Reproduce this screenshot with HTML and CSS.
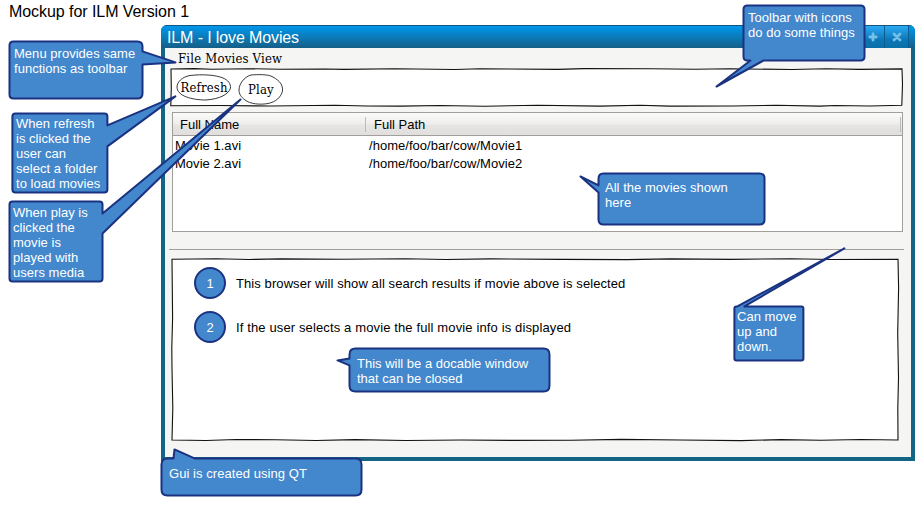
FILE: index.html
```html
<!DOCTYPE html>
<html lang="en">
<head>
<meta charset="utf-8">
<title>Mockup for ILM Version 1</title>
<link rel="stylesheet" href="styles.css">
</head>
<body>
<main class="canvas">
  <h1 class="heading">Mockup for ILM Version 1</h1>

  <section class="window">
    <header class="titlebar">
      <span class="title">ILM - I love Movies</span>
      <div class="controls">
        <span class="control"></span>
        <span class="control"><svg width="10" height="10" viewBox="0 0 10 10"><path d="M5 1.8v6.4M1.8 5h6.4"/></svg></span>
        <span class="control"><svg width="10" height="10" viewBox="0 0 10 10"><path d="M2 2l6 6M8 2L2 8"/></svg></span>
      </div>
    </header>
    <div class="body">
      <nav class="menu">File Movies View</nav>
      <div class="toolbar">
        <svg class="sketch" width="733" height="39" viewBox="0 0 733 39"><path d="M1 1L24 .6 42 1.2 78 .7 110 1.3 154 1 174 1.4 225 .7 285 1.5 310 .8 388 1.4 414 .6 480 .7 525 1.3 560 .8 622 1.5 656 .8 690 1.4 732 .9 732.5 16 731.8 37.3 700 38 665 37.5 650 38.1 606 37.3 562 38 500 38.1 470 37.3 430 38.1 368 37.3 315 38.2 270 37.5 230 38.1 197 38 165 37.2 100 38 50 37.5 .8 37.7 1.3 20Z"/></svg>
        <span class="tool refresh"><svg class="sketch" width="56" height="27" viewBox="0 0 56 27"><path d="M1 13C1 8 6 3 14 1.5 27 0 40 1 47 4 52 6 55 10 54.5 14 53 20 44 25 30 26 16 26 1 22 1 13Z"/></svg>Refresh</span>
        <span class="tool play"><svg class="sketch" width="46" height="31" viewBox="0 0 46 31"><path d="M1 16C1 10 6 3 13 1 20 .5 30 0 35 3 42 7 45 11 44.5 17 43 23 38 28 30 29.5 22 31 12 30 7 26 3 23 1 20 1 16Z"/></svg>Play</span>
      </div>
      <div class="table">
        <div class="thead"><span class="col-name">Full Name</span><span class="col-path">Full Path</span></div>
        <div class="row"><span>Movie 1.avi</span><span>/home/foo/bar/cow/Movie1</span></div>
        <div class="row"><span>Movie 2.avi</span><span>/home/foo/bar/cow/Movie2</span></div>
      </div>
      <div class="splitter"></div>
      <div class="details">
        <svg class="sketch" width="729" height="184" viewBox="0 0 729 184"><path d="M1 1.2L45 .7 78 1.5 110 .9 170 1.3 234 .7 275 1.5 320 .9 390 1.4 456 1.6 500 .9 560 1.4 620 .7 660 1.5 727 1.2 727.6 30 726.7 75 727.5 120 726.8 150 727 182 690 181.5 650 182.3 610 181.6 570 182.6 510 182 450 181.4 400 182.2 340 182.4 290 182 235 182.5 184 181.6 145 182.5 105 181.7 65 181.5 35 182.5 1 182 1.8 150 1 110 .8 90 1.6 60Z"/></svg>
        <div class="note"><span class="num">1</span><span class="text first-text">This browser will show all search results if movie above is selected</span></div>
        <div class="note"><span class="num">2</span><span class="text second-text">If the user selects a movie the full movie info is displayed</span></div>
      </div>
    </div>
  </section>

  <aside class="callout c-menu">
    <svg><path d="M5 1H129Q134 1 134 6V11L167 22 134 24V53Q134 58 129 58H5Q1 58 1 54V5Q1 1 5 1Z"/></svg>
    <p>Menu provides same<br>functions as toolbar</p>
  </aside>
  <aside class="callout c-refresh">
    <svg><path d="M4 1H93Q96 1 96 4V13L164-16 96 34V77Q96 80 93 80H4Q1 80 1 77V4Q1 1 4 1Z"/></svg>
    <p>When refresh<br>is clicked the<br>user can<br>select a folder<br>to load movies</p>
  </aside>
  <aside class="callout c-play">
    <svg><path d="M4 1H91Q94 1 94 4V13L232-101 94 33V78Q94 81 91 81H4Q1 81 1 78V4Q1 1 4 1Z"/></svg>
    <p>When play is<br>clicked the<br>movie is<br>played with<br>users media</p>
  </aside>
  <aside class="callout c-toolbar">
    <svg><path d="M5 1H118Q122 1 122 5V52Q122 56 118 56H21L-26 82 8 56H5Q1 56 1 52V5Q1 1 5 1Z"/></svg>
    <p>Toolbar with icons<br>do do some things</p>
  </aside>
  <aside class="callout c-movies">
    <svg><path d="M6 1H162Q167 1 167 6V47Q167 52 162 52H6Q1 52 1 47V20L-17 4 1 13V6Q1 1 6 1Z"/></svg>
    <p>All the movies shown<br>here</p>
  </aside>
  <aside class="callout c-splitter">
    <svg><path d="M3 1H4L111-57 11 1H68Q70 1 70 3V53Q70 55 68 55H3Q1 55 1 53V3Q1 1 3 1Z"/></svg>
    <p>Can move<br>up and<br>down.</p>
  </aside>
  <aside class="callout c-dock">
    <svg><path d="M7 1H195Q201 1 201 7V38Q201 44 195 44H7Q1 44 1 38V18L-11 13 1 11V7Q1 1 7 1Z"/></svg>
    <p>This will be a docable window<br>that can be closed</p>
  </aside>
  <aside class="callout c-gui">
    <svg><path d="M7 1H13L14-8 34 1H195Q201 1 201 7V32Q201 38 195 38H7Q1 38 1 32V7Q1 1 7 1Z"/></svg>
    <p>Gui is created using QT</p>
  </aside>
</main>
</body>
</html>
```
FILE: styles.css
```css
* { box-sizing: border-box; }
body {
  margin: 0;
  background: #fff;
  color: #000;
  font: 13px/18px "Liberation Sans", sans-serif;
}
.canvas { position: relative; width: 921px; height: 524px; overflow: hidden; white-space: nowrap; }
.heading { margin: 0; padding: 2px 0 0 9px; height: 25px; font-size: 16px; line-height: 19px; font-weight: 400; letter-spacing: -.06px; }

.window {
  width: 754px;
  height: 436px;
  margin-left: 161px;
  background: #146488;
  border-radius: 6px 6px 0 0;
  overflow: hidden;
}
.titlebar {
  display: flex;
  justify-content: space-between;
  height: 23px;
  padding-left: 6px;
  border-top: 1px solid #15567a;
  background: linear-gradient(#0097ec, #155f87);
}
.title { color: #fff; font-size: 16px; line-height: 23px; letter-spacing: -.12px; }
.controls { display: flex; margin-right: 6px; }
.control {
  display: flex;
  align-items: center;
  justify-content: center;
  width: 24px;
  border-right: 1px solid #0a5d8e;
  background: linear-gradient(#2aa9f5, #0b75b4 65%, #0b70a8);
}
.control path { fill: none; stroke: #76bfe8; stroke-width: 2.8; stroke-linecap: round; }

.body { height: 409px; margin: 0 4px; background: #f5f5f4; }
.menu { height: 20px; padding: 1px 0 0 13px; font: 13px/19px "DejaVu Serif Condensed", "DejaVu Serif", serif; letter-spacing: .2px; }
.sketch { position: absolute; left: 0; top: 0; overflow: visible; }
.sketch path { fill: #fff; stroke: #111; stroke-width: 1.1; }

.toolbar { position: relative; display: flex; width: 733px; height: 39px; margin-left: 5px; padding: 6px 0 0 6px; gap: 6px; }
.tool { position: relative; z-index: 0; text-align: center; font: 13px/27px "DejaVu Serif Condensed", "DejaVu Serif", serif; letter-spacing: .15px; }
.tool .sketch { z-index: -1; }
.tool .sketch path { stroke-width: .9; stroke: #222; }
.refresh { width: 56px; height: 27px; }
.play { width: 46px; height: 31px; line-height: 31px; }

.table { width: 731px; height: 120px; margin: 5px 0 0 7px; border: 1px solid #a09f9c; background: #fff; }
.thead {
  display: grid;
  grid-template-columns: 193px 1fr;
  align-items: center;
  height: 23px;
  margin-bottom: 1px;
  padding-right: 1px;
  border-bottom: 1px solid #a09f9c;
  background: linear-gradient(#fbfbfa, #eeedec 50%, #e6e5e4 55%, #e0dfde);
}
.thead span { height: 15px; line-height: 16px; padding-left: 7px; border-right: 1px solid #bbb; }
.thead .col-path { padding-left: 8px; }
.row { display: grid; grid-template-columns: 194px 1fr; height: 18px; padding-left: 2px; letter-spacing: .03px; }

.splitter { width: 735px; height: 1px; margin: 17px 0 0 4px; background: #a09f99; }

.details { position: relative; z-index: 0; width: 729px; height: 184px; margin: 8px 0 0 6px; padding: 9px 0 0 23px; }
.details > .sketch { z-index: -1; }
.note { display: flex; align-items: center; gap: 10px; height: 32px; margin-bottom: 12px; }
.text { padding-top: 2px; }
.first-text { letter-spacing: .085px; }
.second-text { letter-spacing: .13px; }
.num {
  width: 32px;
  height: 32px;
  border: 2px solid #1b3281;
  border-radius: 50%;
  background: #4387cd;
  color: #fff;
  line-height: 29px;
  text-align: center;
}

.callout { position: absolute; color: #fff; line-height: 15px; letter-spacing: .03px; }
.callout p { position: relative; margin: 0; }
.callout svg { position: absolute; left: 0; top: 0; width: 100%; height: 100%; overflow: visible; transform: translate(-.5px, .4px); }
.callout path { fill: #4387cd; stroke: #1b3281; stroke-width: 2; stroke-linejoin: round; }
.c-play svg, .c-toolbar svg { transform: translate(-.5px, -.5px); }
.c-refresh svg, .c-splitter svg { transform: translate(.4px, .4px); }
.c-menu { left: 9px; top: 40px; width: 135px; height: 60px; padding: 6px 5px; }
.c-refresh { left: 11px; top: 112px; width: 97px; height: 81px; padding: 4px 5px; }
.c-play { left: 9px; top: 201px; width: 95px; height: 82px; padding: 4px; }
.c-toolbar { left: 743px; top: 5px; width: 123px; height: 57px; padding: 5px; }
.c-movies { left: 598px; top: 172px; width: 168px; height: 53px; padding: 8px 7px; }
.c-splitter { left: 733px; top: 305px; width: 71px; height: 56px; padding: 4px; }
.c-dock { left: 349px; top: 347px; width: 202px; height: 45px; padding: 9px 8px; letter-spacing: 0; }
.c-gui { left: 161px; top: 457px; width: 202px; height: 39px; padding: 9px 8px; letter-spacing: .06px; }
```
